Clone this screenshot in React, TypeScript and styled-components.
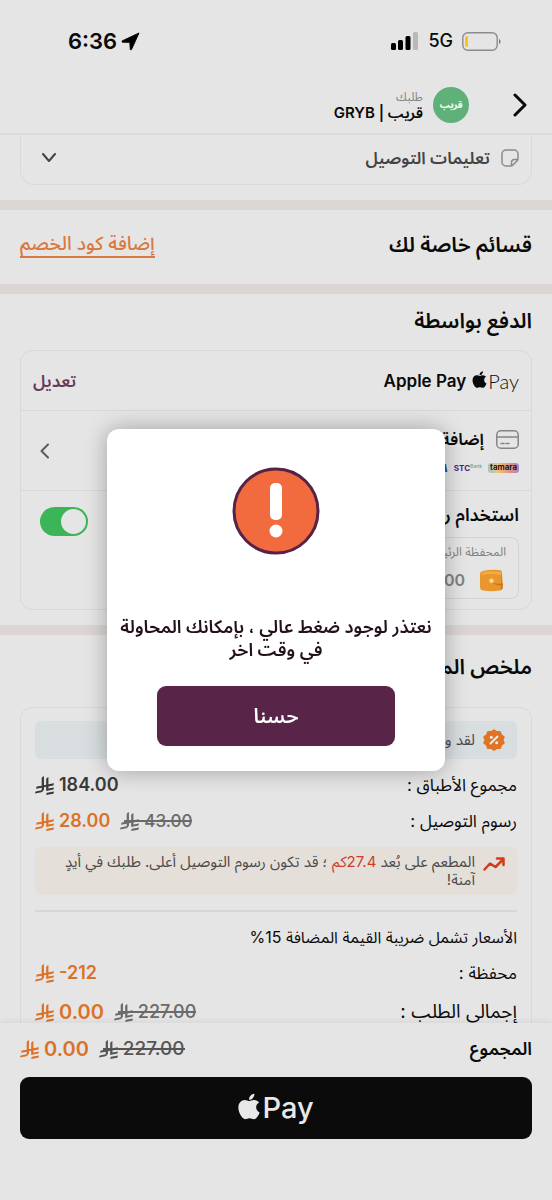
import React from "react";
import styled, { createGlobalStyle } from "styled-components";
import { FaApple } from "react-icons/fa";

const font = `Inter, "Noto Sans Arabic", "DejaVu Sans", sans-serif`;

const GlobalStyle = createGlobalStyle`
  *, *::before, *::after { box-sizing: border-box; }
  body { margin: 0; background: #e5e5e5; font-family: ${font}; color: #0a0a0a; }
  button, input { font-family: inherit; }
  h2, p { margin: 0; }
`;

const Screen = styled.div`
  height: 100vh;
  display: flex;
  flex-direction: column;
  background: #e5e5e5;
  overflow: hidden;
`;

const StatusBar = styled.div`
  direction: ltr;
  display: flex;
  align-items: center;
  justify-content: space-between;
  padding: 26px 51px 0 68px;
  height: 56px;
  flex: none;
`;

const StatusGroup = styled.div<{ $gap: number }>`
  display: flex;
  align-items: center;
  gap: ${(p) => p.$gap}px;
`;

const Clock = styled.time`
  font-size: 22px;
  line-height: 28px;
  font-weight: 600;
`;

const Network = styled.span`
  font-size: 18px;
  line-height: 28px;
  font-weight: 500;
`;

const Header = styled.header`
  display: flex;
  align-items: center;
  flex: none;
  height: 79px;
  padding: 20px 24px 0;
  border-bottom: 2px solid #dbdbdb;
`;

const IconButton = styled.button`
  display: flex;
  padding: 0;
  border: 0;
  background: none;
  color: inherit;
  cursor: pointer;
`;

const ShopLogo = styled.div`
  width: 36px;
  height: 36px;
  margin: 0 44px 0 10px;
  border-radius: 50%;
  background: #5fb079;
  color: #eefaf1;
  display: flex;
  align-items: center;
  justify-content: center;
  font-size: 9px;
  line-height: 12px;
  font-weight: 900;
`;

const ShopText = styled.div`
  display: flex;
  flex-direction: column;
`;

const ShopCaption = styled.span`
  font-size: 12px;
  line-height: 16px;
  color: #858585;
`;

const ShopName = styled.strong`
  font-size: 15px;
  line-height: 16px;
  font-weight: 600;
`;

const Main = styled.main`
  flex: 1;
  min-height: 0;
  overflow-y: auto;
  scrollbar-width: none;
`;

const Section = styled.section<{ $pad: string }>`
  padding: ${(p) => p.$pad};
  border-bottom: 10px solid #dbd6d4;
`;

const SectionTitle = styled.h2`
  font-size: 21px;
  line-height: 28px;
  font-weight: 600;
`;

const Instructions = styled.button`
  display: flex;
  align-items: center;
  width: 100%;
  height: 50px;
  padding: 0 12px 4px 20px;
  gap: 11px;
  border: 1px solid #d9d9d9;
  border-top: 0;
  border-radius: 0 0 14px 14px;
  background: none;
  color: #444;
  font-size: 17px;
  line-height: 24px;
  font-weight: 600;
  cursor: pointer;
`;

const Spacer = styled.span`
  flex: 1;
`;

const SplitRow = styled.div`
  display: flex;
  align-items: center;
  justify-content: space-between;
`;

const CouponLink = styled.a`
  color: #d9783f;
  font-size: 19px;
  line-height: 24px;
  font-weight: 500;
  text-decoration: none;
  border-bottom: 2px solid #d9783f;
`;

const Card = styled.div<{ $top: number; $pad?: string }>`
  margin-top: ${(p) => p.$top}px;
  padding: ${(p) => p.$pad ?? "0"};
  border: 1px solid #d8d8d8;
  border-radius: 12px;
`;

const MethodRow = styled.div<{ $height: number }>`
  display: flex;
  align-items: center;
  height: ${(p) => p.$height}px;
  padding: 0 12px;
  border-bottom: 1px solid #d8d8d8;
`;

const PayMark = styled.span<{ $large?: boolean }>`
  direction: ltr;
  display: inline-flex;
  align-items: center;
  gap: ${(p) => (p.$large ? 2 : 1)}px;
  font-family: ${(p) => (p.$large ? "Inter" : "Lato")}, sans-serif;
  font-size: ${(p) => (p.$large ? 29 : 20)}px;
  line-height: 32px;
  font-weight: ${(p) => (p.$large ? 500 : 300)};
  svg {
    width: ${(p) => (p.$large ? 22 : 15)}px;
    margin-bottom: 3px;
  }
`;

const MethodName = styled.span`
  margin-right: 6px;
  font-size: 17px;
  line-height: 24px;
  font-weight: 600;
`;

const EditButton = styled.button`
  padding: 0;
  border: 0;
  background: none;
  color: #643b5a;
  font-size: 17px;
  line-height: 24px;
  font-weight: 600;
  cursor: pointer;
`;

const AddCard = styled.div`
  display: flex;
  flex-direction: column;
  gap: 11px;
  white-space: nowrap;
`;

const AddCardTitle = styled.div`
  display: flex;
  align-items: center;
  gap: 12px;
  font-size: 17px;
  line-height: 24px;
  font-weight: 600;
`;

const Brands = styled.div`
  display: flex;
  align-items: center;
  gap: 6px;
  height: 12px;
`;

const Tamara = styled.span`
  padding: 0 2px 1px;
  border-radius: 3px;
  background: linear-gradient(90deg, #9cc6e0, #eec27a 30%, #e2907f 70%, #b184c4);
  font-size: 8px;
  line-height: 9px;
  font-weight: 600;
`;

const Stc = styled.span`
  direction: ltr;
  display: flex;
  align-items: flex-start;
  color: #532083;
  font-size: 8px;
  line-height: 12px;
  font-weight: 700;
`;

const StcBank = styled.span`
  color: #62ad88;
  font-size: 5px;
  line-height: 8px;
  font-weight: 500;
`;

const Visa = styled.span`
  color: #1c50a0;
  font-size: 11px;
  line-height: 12px;
  font-weight: 800;
  font-style: italic;
`;

const WalletRow = styled.div`
  display: flex;
  align-items: flex-start;
  justify-content: space-between;
  padding: 12px 12px 10px 19px;
`;

const WalletTitle = styled.label`
  display: block;
  padding-bottom: 10px;
  font-size: 18px;
  line-height: 24px;
  font-weight: 600;
  white-space: nowrap;
`;

const WalletChip = styled.div`
  height: 62px;
  width: 124px;
  padding: 6px 12px;
  border: 1px solid #d4d4d4;
  border-radius: 8px;
  color: #808080;
  font-size: 12px;
  line-height: 16px;
  white-space: nowrap;
`;

const WalletBalance = styled.div`
  display: flex;
  align-items: center;
  gap: 14px;
  padding: 8px 2px 0 0;
  font-size: 16px;
  line-height: 24px;
  font-weight: 600;
`;

const Toggle = styled.input`
  appearance: none;
  direction: ltr;
  width: 48px;
  height: 29px;
  margin: 4px 0 0;
  padding: 2px;
  border-radius: 15px;
  background: #bdbdbd;
  display: flex;
  cursor: pointer;
  &:checked {
    justify-content: flex-end;
    background: #3bb557;
  }
  &::before {
    content: "";
    width: 25px;
    height: 25px;
    border-radius: 50%;
    background: #e5e5e5;
  }
`;

const Summary = styled.section`
  padding: 18px 20px;
`;

const Notice = styled.div<{ $tone: "info" | "warn" }>`
  display: flex;
  gap: 8px;
  padding: ${(p) => (p.$tone === "info" ? "8px 12px" : "6px 12px")};
  margin: ${(p) => (p.$tone === "info" ? "0 0 8px" : "8px 0 15px")};
  border-radius: 6px;
  background: ${(p) => (p.$tone === "info" ? "#d8dde0" : "#e5dfd9")};
  color: #4a4a4a;
  font-size: 15px;
  line-height: ${(p) => (p.$tone === "info" ? 22 : 18)}px;
  svg { flex: none; }
`;

const Distance = styled.span`
  display: inline-block;
  color: #d03c25;
`;

const Line = styled.div<{ $size?: number }>`
  display: flex;
  align-items: center;
  justify-content: space-between;
  height: ${(p) => (p.$size === 19 ? 42 : 36)}px;
  font-size: ${(p) => p.$size ?? 17}px;
  line-height: 24px;
`;

const Divider = styled.hr`
  height: 2px;
  margin: 0 0 7px;
  border: 0;
  background: #d3d7d8;
`;

const Prices = styled.div`
  direction: ltr;
  display: flex;
  align-items: center;
  gap: 10px;
`;

const Price = styled.span<{ $color: string; $size: number }>`
  display: inline-flex;
  align-items: center;
  gap: 5px;
  color: ${(p) => p.$color};
  font-size: ${(p) => p.$size}px;
  line-height: 24px;
  font-weight: 600;
`;

const OldPrice = styled(Price).attrs({ as: "del" })`
  position: relative;
  font-weight: 500;
  text-decoration: none;
  &::after {
    content: "";
    position: absolute;
    inset: 11px 0 auto 4px;
    height: 2px;
    background: currentColor;
  }
`;

const Footer = styled.footer`
  flex: none;
  padding: 10px 20px 61px;
  background: #e5e5e5;
  box-shadow: 0 -2px 6px rgba(0, 0, 0, 0.06);
`;

const TotalLabel = styled.strong`
  font-size: 18px;
  line-height: 32px;
  font-weight: 600;
`;

const PayButton = styled.button`
  display: flex;
  align-items: center;
  justify-content: center;
  width: 100%;
  height: 62px;
  margin-top: 12px;
  border: 0;
  border-radius: 9px;
  background: #0b0b0b;
  color: #e8e8e8;
  cursor: pointer;
`;

const Backdrop = styled.div`
  position: fixed;
  inset: 0;
  display: flex;
  align-items: center;
  justify-content: center;
  padding: 20px;
`;

const Dialog = styled.div`
  display: flex;
  flex-direction: column;
  align-items: center;
  width: 338px;
  max-width: 100%;
  padding: 38px 8px 25px;
  border-radius: 12px;
  background: #fff;
  box-shadow: 0 0 22px rgba(0, 0, 0, 0.3);
`;

const Message = styled.p`
  margin: 60px 0 25px;
  color: #22101d;
  font-size: 18px;
  line-height: 23px;
  font-weight: 600;
  text-align: center;
`;

const OkButton = styled.button`
  width: 238px;
  max-width: 100%;
  height: 60px;
  padding: 0;
  border: 0;
  border-radius: 9px;
  background: #582549;
  color: #fff;
  font-size: 20px;
  line-height: 24px;
  font-weight: 600;
  cursor: pointer;
`;

const MoreButton = styled(IconButton)`
  color: #5a5a5a;
`;

const Riyal = () => (
  <svg width="19" height="19" viewBox="0 0 1124 1256" preserveAspectRatio="none" fill="currentColor" aria-hidden="true">
    <path d="M699.62,1113.02c-20.06,44.48-33.32,92.75-38.4,143.37l424.51-90.24c20.06-44.47,33.31-92.75,38.4-143.37l-424.51,90.24Z" />
    <path d="M1085.73,895.8c20.06-44.47,33.32-92.75,38.4-143.37l-330.68,70.33v-135.2l292.27-62.11c20.06-44.47,33.32-92.75,38.4-143.37l-330.68,70.27V66.13c-50.67,28.45-95.67,66.32-132.25,110.99v403.35l-132.25,28.11V0c-50.67,28.44-95.67,66.32-132.25,110.99v525.69l-295.91,62.88c-20.06,44.47-33.33,92.75-38.42,143.37l334.33-71.05v170.26l-358.3,76.14c-20.06,44.47-33.32,92.75-38.4,143.37l375.04-79.7c30.53-6.35,56.77-24.4,73.83-49.24l68.78-101.97c7.14-10.55,11.3-23.27,11.3-36.97v-149.98l132.25-28.11v270.4l424.53-90.28Z" />
  </svg>
);

const Chevron = ({ d, w, h, stroke }: { d: string; w: number; h: number; stroke: number }) => (
  <svg width={w} height={h} viewBox={`0 0 ${w} ${h}`} fill="none" stroke="currentColor" strokeWidth={stroke} strokeLinecap="round" strokeLinejoin="round" aria-hidden="true">
    <path d={d} />
  </svg>
);

const ORANGE = "#dc7128";

type AmountProps = { now: string; before?: string; color?: string; beforeColor?: string; size?: number; beforeSize?: number };

const Amount = ({ now, before, color = ORANGE, beforeColor = "#6a6a6a", size = 18, beforeSize = 17 }: AmountProps) => (
  <Prices>
    <Price $color={color} $size={size}><Riyal />{now}</Price>
    {before && <OldPrice $color={beforeColor} $size={beforeSize}><Riyal />{before}</OldPrice>}
  </Prices>
);

export default function App() {
  return (
    <Screen dir="rtl" lang="ar">
      <GlobalStyle />
      <StatusBar>
        <StatusGroup $gap={4}>
          <Clock>6:36</Clock>
          <svg width="19" height="19" viewBox="0 0 19 19" strokeWidth="1" stroke="#0a0a0a" strokeLinejoin="round" aria-hidden="true">
            <path d="M18 1L1 9Q.8 10 1.500 10.200L8.800 10.300 9.300 17.500Q9.800 18.600 10.500 17.500Z" />
          </svg>
        </StatusGroup>
        <StatusGroup $gap={9}>
          <svg width="28" height="18" viewBox="0 0 28 18" aria-hidden="true">
            <rect x="0" y="11" width="5" height="7" rx="1.500" />
            <rect x="7" y="8" width="5" height="10" rx="1.500" />
            <rect x="14.500" y="4" width="5" height="14" rx="1.500" />
            <rect x="22" y="0" width="5" height="18" rx="1.500" fill="#b9b9b9" />
          </svg>
          <Network>5G</Network>
          <svg width="39" height="19" viewBox="0 0 39 19" fill="none" aria-hidden="true">
            <rect x=".8" y=".8" width="34.400" height="17.400" rx="5" stroke="#8c8c8c" strokeWidth="1.400" />
            <path d="M6 4v11c-2 0-3-.7-3-2.500v-6C3 4.700 4 4 6 4Z" fill="#f5c518" />
            <path d="M37 7c2 .8 2 4.200 0 5Z" fill="#777" />
          </svg>
        </StatusGroup>
      </StatusBar>

      <Header>
        <IconButton aria-label="رجوع">
          <Chevron w={15} h={24} stroke={3} d="M2 2l10 10L2 22" />
        </IconButton>
        <ShopLogo aria-hidden="true">قريب</ShopLogo>
        <ShopText>
          <ShopCaption>طلبك</ShopCaption>
          <ShopName>قريب | GRYB</ShopName>
        </ShopText>
      </Header>

      <Main>
        <Section $pad="0 20px 15px">
          <Instructions>
            <svg width="18" height="18" viewBox="0 0 18 18" fill="none" stroke="#8a8a8a" strokeWidth="1.500" strokeLinejoin="round" aria-hidden="true">
              <path d="M10 17H5a4 4 0 0 1-4-4V5a4 4 0 0 1 4-4h8a4 4 0 0 1 4 4v5c0 .8-.3 1.200-.8 1.700l-4.500 4.500c-.5.5-.9.8-1.700.8ZM10.500 17v-3.500a3 3 0 0 1 3-3H17" />
            </svg>
            تعليمات التوصيل
            <Spacer />
            <Chevron w={16} h={10} stroke={2} d="M2 1l6 7 6-7" />
          </Instructions>
        </Section>

        <Section $pad="21px 20px 25px">
          <SplitRow>
            <SectionTitle>قسائم خاصة لك</SectionTitle>
            <CouponLink href="#coupon">إضافة كود الخصم</CouponLink>
          </SplitRow>
        </Section>

        <Section $pad="13px 20px 15px">
          <SectionTitle>الدفع بواسطة</SectionTitle>
          <Card $top={15}>
            <MethodRow $height={60}>
              <PayMark><FaApple size={19} />Pay</PayMark>
              <MethodName dir="ltr">Apple Pay</MethodName>
              <Spacer />
              <EditButton>تعديل</EditButton>
            </MethodRow>
            <MethodRow $height={80}>
              <AddCard>
                <AddCardTitle>
                  <svg width="23" height="19" viewBox="0 0 23 19" fill="none" stroke="#858585" strokeWidth="1.500" strokeLinecap="round" aria-hidden="true">
                    <rect x=".8" y=".8" width="21.400" height="17.400" rx="4" />
                    <path d="M1 7h21M5 13.500h3M10 13.500h3" />
                  </svg>
                  إضافة بطاقة
                </AddCardTitle>
                <Brands>
                  <Tamara>tamara</Tamara>
                  <Stc>STC<StcBank>Bank</StcBank></Stc>
                  <Visa>VISA</Visa>
                </Brands>
              </AddCard>
              <Spacer />
              <MoreButton aria-label="إضافة بطاقة">
                <Chevron w={24} h={16} stroke={2} d="M15 1.500L8.500 8l6.500 6.500" />
              </MoreButton>
            </MethodRow>
            <WalletRow>
              <div>
                <WalletTitle htmlFor="wallet">استخدام رصيد</WalletTitle>
                <WalletChip>
                  المحفظة الرئيسية
                  <WalletBalance>
                    <svg width="25" height="23" viewBox="0 0 25 23" aria-hidden="true">
                      <path d="M4 2Q12 0 20 1q3 0 3 3l1 14q0 3-3 3.500Q12 23 4 21.500q-3-.5-3-3.500V5q0-2.500 3-3Z" fill="#e8962e" />
                      <path d="M3 3.500Q12 1.500 22 3v3Q12 4 2 6Z" fill="#f2ac45" />
                      <path d="M13 13.500q5 2 11 1v1.500q-7 1-11-2.500Z" fill="#c8711d" />
                      <path d="M22 4l1.500 14q0 2.500-2 3.300Q22.500 12 22 4Z" fill="#d27a20" />
                      <circle cx="12.500" cy="11.800" r="2.300" fill="#f9da72" />
                    </svg>
                    <span>0.00</span>
                  </WalletBalance>
                </WalletChip>
              </div>
              <Toggle id="wallet" type="checkbox" role="switch" defaultChecked />
            </WalletRow>
          </Card>
        </Section>

        <Summary>
          <SectionTitle>ملخص المبلغ</SectionTitle>
          <Card $top={26} $pad="13px 14px">
            <Notice $tone="info">
              <svg width="22" height="22" viewBox="0 0 22 22" aria-hidden="true">
                <path fill="#e07422" stroke="#e07422" strokeWidth="2" strokeLinejoin="round" d="M11 1.200l2.700 1.900 3.300-.1 1 3.100 2.700 2-1.100 2.900 1.100 3-2.700 1.900-1 3.200-3.300-.1L11 20.800 8.300 19l-3.300.1-1-3.200L1.300 14l1.100-3-1.100-2.900L4 6.100 5 3l3.300.1Z" />
                <path stroke="#eee" strokeWidth="1.800" strokeLinecap="round" d="M7.500 14.500l7-7" />
                <circle cx="8.300" cy="8.300" r="1.500" fill="#eee" />
                <circle cx="13.700" cy="13.700" r="1.500" fill="#eee" />
              </svg>
              <span>لقد وفرت 15.00</span>
            </Notice>
            <Line>مجموع الأطباق :<Amount now="184.00" color="#393939" /></Line>
            <Line>رسوم التوصيل :<Amount now="28.00" before="43.00" /></Line>
            <Notice $tone="warn">
              <svg width="22" height="22" viewBox="0 0 22 22" fill="none" stroke="#d03c1d" strokeWidth="2.500" strokeLinecap="round" strokeLinejoin="round" aria-hidden="true">
                <path d="M1.500 16.500l5.500-6 5.500 3.500 8-8M14 5.500h6.500v6.500" />
              </svg>
              <span>المطعم على بُعد <Distance>27.4كم</Distance> ؛ قد تكون رسوم التوصيل أعلى. طلبك في أيدٍ آمنة!</span>
            </Notice>
            <Divider />
            <Line $size={16}>الأسعار تشمل ضريبة القيمة المضافة 15%</Line>
            <Line>محفظة :<Amount now="-212" /></Line>
            <Line $size={19}>إجمالى الطلب :<Amount now="0.00" before="227.00" size={20} beforeSize={18} /></Line>
          </Card>
        </Summary>
      </Main>

      <Footer>
        <SplitRow>
          <TotalLabel>المجموع</TotalLabel>
          <Amount now="0.00" before="227.00" size={20} beforeSize={19} beforeColor="#555" />
        </SplitRow>
        <PayButton aria-label="Apple Pay">
          <PayMark $large><FaApple size={29} />Pay</PayMark>
        </PayButton>
      </Footer>

      <Backdrop>
        <Dialog role="alertdialog" aria-modal="true" aria-describedby="message">
          <svg width="88" height="88" viewBox="0 0 88 88" aria-hidden="true">
            <circle cx="44" cy="44" r="42" fill="#f16b3f" stroke="#552345" strokeWidth="3" />
            <rect x="38" y="16" width="12" height="37" rx="5" fill="#fff" />
            <circle cx="44" cy="64" r="6.500" fill="#fff" />
          </svg>
          <Message id="message">نعتذر لوجود ضغط عالي ، بإمكانك المحاولة في وقت اخر</Message>
          <OkButton>حسنا</OkButton>
        </Dialog>
      </Backdrop>
    </Screen>
  );
}
